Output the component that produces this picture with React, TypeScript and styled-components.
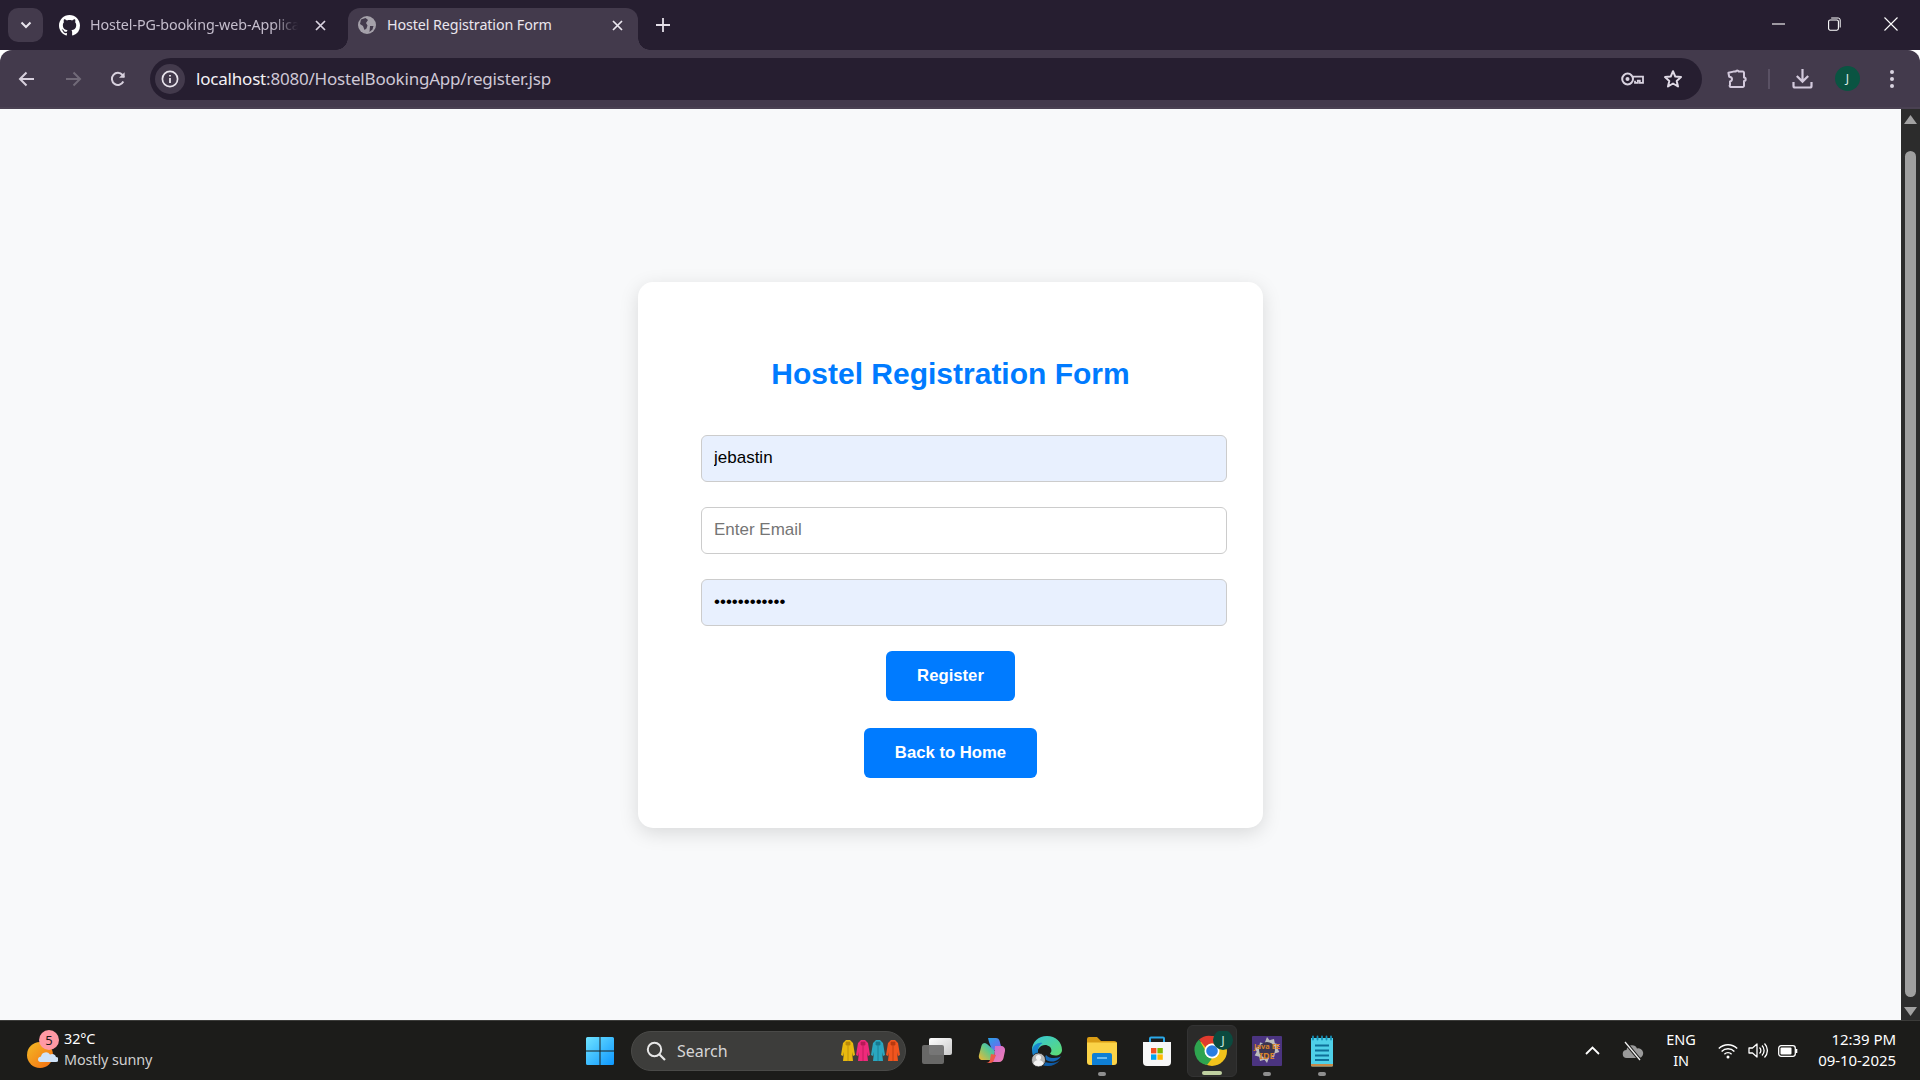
import React from "react";
import styled, { createGlobalStyle } from "styled-components";

const Global = createGlobalStyle`
  html, body { margin: 0; padding: 0; height: 100%; overflow: hidden; }
  #root { height: 1080px; }
  * { font-family: "Noto Sans", sans-serif; }
`;

const Shell = styled.div`
  width: 1920px; height: 1080px; display: flex; flex-direction: column; overflow: hidden;
`;

/* ---------- Browser chrome ---------- */
const TabStrip = styled.div`
  height: 50px; flex: none; background: #261e30; display: flex; align-items: flex-end; padding-left: 8px; box-sizing: border-box;
`;
const TabSearch = styled.div`
  width: 35px; height: 34px; margin-bottom: 8px; border-radius: 10px; background: #433a4c;
  display: flex; align-items: center; justify-content: center; flex: none;
`;
const Tab = styled.div<{ $active?: boolean }>`
  width: ${p => (p.$active ? 290 : 293)}px; height: 42px; flex: none; position: relative; box-sizing: border-box;
  display: flex; align-items: center; padding: 0 ${p => (p.$active ? 15 : 10)}px 8px ${p => (p.$active ? 10 : 16)}px;
  margin-left: ${p => (p.$active ? 12 : 0)}px;
  border-radius: 12px 12px 0 0; background: ${p => (p.$active ? "#433a4c" : "transparent")};
  color: ${p => (p.$active ? "#eae6ee" : "#c4bdcc")};
  ${p => p.$active && `
    &::before, &::after { content: ""; position: absolute; bottom: 0; width: 12px; height: 12px; }
    &::before { left: -12px; background: radial-gradient(circle at 0 0, transparent 11.5px, #433a4c 12px); }
    &::after { right: -12px; background: radial-gradient(circle at 100% 0, transparent 11.5px, #433a4c 12px); }
  `}
`;
const TabTitle = styled.span<{ $fade?: boolean }>`
  flex: 1; min-width: 0; margin-left: ${p => (p.$fade ? 10 : 11)}px; font-size: 14.3px; white-space: nowrap; overflow: hidden; position: relative; top: -1px; letter-spacing: -0.1px;
  ${p => p.$fade && "margin-right: 17px; -webkit-mask-image: linear-gradient(90deg, #000 88%, transparent 100%);"}
`;
const NewTab = styled.div`
  margin: 0 0 9px 14px; width: 22px; height: 32px; display: flex; align-items: center; justify-content: center; color: #e4dfe8;
`;
const WindowControls = styled.div`
  margin-left: auto; height: 50px; display: flex; align-items: center; padding: 0 22px 2px 0; gap: 43px; box-sizing: border-box;
`;
const Toolbar = styled.div`
  height: 59px; flex: none; background: #433a4c; border-radius: 12px 12px 0 0; display: flex; align-items: center; box-sizing: border-box;
  border-bottom: 2px solid #4a4152; padding: 0 0 0 15px;
`;
const NavButton = styled.div`
  width: 24px; height: 24px; flex: none; margin-right: 21.5px; display: flex; align-items: center; justify-content: center;
`;
const Omnibox = styled.div`
  width: 1552px; height: 42px; margin-left: -1.5px; border-radius: 21px; background: #261e30; flex: none;
  display: flex; align-items: center; padding: 0 19px 0 5px; box-sizing: border-box;
`;
const InfoBubble = styled.div`
  width: 30px; height: 30px; border-radius: 50%; background: #433a4c; display: flex; align-items: center; justify-content: center; flex: none;
`;
const Url = styled.div`
  margin-left: 11px; font-size: 17px; color: #cfc8d6; letter-spacing: -0.2px; flex: 1;
  b { font-weight: 400; color: #f4f1f6; }
`;
const OmniIcons = styled.div`
  display: flex; align-items: center; gap: 19px;
`;
const ToolIcons = styled.div`
  display: flex; align-items: center; margin-left: 24px; flex: none;
`;
const Separator = styled.div`
  width: 2px; height: 20px; background: #5a5164; margin: 0 22px 0 20px;
`;
const Avatar = styled.div`
  width: 25px; height: 25px; border-radius: 50%; background: #0a5442; color: #dfeee9; font-size: 12px; margin: 0 29px 0 22px;
  display: flex; align-items: center; justify-content: center; flex: none;
`;

/* ---------- Page ---------- */
const Viewport = styled.div`
  flex: 1; min-height: 0; display: flex; background: #f8f9fa;
`;
const Page = styled.main`
  flex: 1; display: flex; align-items: center; justify-content: center; padding-bottom: 19px;
`;
const Card = styled.div`
  width: 625px; height: 546px; box-sizing: border-box; background: #fff; border-radius: 15px; padding: 50px 63px;
  box-shadow: 0 5px 19px rgba(0, 0, 0, 0.13); display: flex; flex-direction: column; align-items: flex-start;
`;
const Title = styled.h2`
  margin: 24px 0 44px; align-self: stretch; text-align: center; color: #007bff;
  font: 700 30px/35px "Liberation Sans", Arial, sans-serif;
`;
const Field = styled.input<{ $filled?: boolean }>`
  display: block; width: 100%; height: 43px; flex: none; box-sizing: content-box; padding: 0 13px 2px 12px; margin: 0 0 25px; border: 1px solid #ccc; border-radius: 6px;
  font: 400 17px "Liberation Sans", Arial, sans-serif; color: #000; outline: none;
  background: ${p => (p.$filled ? "#e8f0fe" : "#fff")};
  &::placeholder { color: #757575; opacity: 1; }
`;
const Actions = styled.div`
  align-self: stretch; display: flex; flex-direction: column; align-items: center; gap: 27px;
`;
const Primary = styled.button`
  height: 50px; padding: 0 31px; border: 0; border-radius: 6px; background: #007bff; color: #fff;
  font: 700 16.7px "Liberation Sans", Arial, sans-serif;
`;
const Scrollbar = styled.div`
  width: 19px; flex: none; background: #2c2c2c; display: flex; flex-direction: column; align-items: center; justify-content: space-between; padding: 6px 0 4px; box-sizing: border-box;
`;
const Thumb = styled.div`
  width: 11px; flex: 1; background: #9f9f9f; border-radius: 6px; margin: 27px 0 10px;
`;

/* ---------- Taskbar ---------- */
const Taskbar = styled.footer`
  height: 60px; flex: none; background: #1c1c1a; border-top: 1px solid #3c3c3a; box-sizing: border-box; display: flex; align-items: center; color: #fff;
`;
const Weather = styled.div`
  width: 572px; flex: none; display: flex; align-items: center; padding-left: 26px; box-sizing: border-box;
`;
const WeatherIcon = styled.div`
  width: 32px; height: 40px; position: relative; flex: none; margin-right: 6px;
`;
const Badge = styled.span`
  position: absolute; left: 13px; top: -1px; width: 20px; height: 20px; border-radius: 50%; background: #ff99a4; color: #1a1a1a;
  font-size: 13px; display: flex; align-items: center; justify-content: center;
`;
const WeatherText = styled.div`
  font-size: 14.4px; line-height: 21px; letter-spacing: -0.1px; margin-top: -4px;
  small { display: block; font-size: 14.4px; color: #cfcfcf; }
`;
const Slot = styled.div`
  width: 55px; height: 52px; flex: none; position: relative; display: flex; align-items: center; justify-content: center; border-radius: 6px;
`;
const ActiveSlot = styled(Slot)`
  background: #2b2b2a; border: 1px solid #333; box-sizing: border-box; width: 50px; margin: 0 2.5px;
`;
const RunDot = styled.i<{ $active?: boolean }>`
  position: absolute; bottom: 1px; left: 50%; transform: translateX(-50%); height: 3.5px; border-radius: 2px;
  width: ${p => (p.$active ? 20 : 8)}px; background: ${p => (p.$active ? "#bfd0a0" : "#8e8e8e")};
`;
const SearchBox = styled.div`
  width: 275px; height: 40px; margin: 0 3px 0 4px; flex: none; box-sizing: border-box; border-radius: 20px; background: #3d3d3b; border: 1px solid #4a4a48; display: flex; align-items: center; padding: 0 5px 0 14px;
`;
const SearchLabel = styled.span`
  flex: 1; margin-left: 11px; font-size: 16px; color: #d6d6d6;
`;
const Tray = styled.div`
  margin-left: auto; display: flex; align-items: center; padding-right: 24px;
`;
const Lang = styled.div`
  width: 34px; font-size: 14.5px; line-height: 21px; text-align: center; margin: -1px 20px 0; letter-spacing: -0.1px;
`;
const Clock = styled.div`
  font-size: 15px; line-height: 21px; text-align: right; margin: -1px 0 0 10px; width: 88px; letter-spacing: -0.05px;
`;
const TrayIcon = styled.div<{ $gap?: number }>`
  display: flex; align-items: center; justify-content: center; flex: none; margin-left: ${p => p.$gap ?? 0}px;
`;

/* ---------- Icons ---------- */
const Chevron = () => (
  <svg width="12" height="8" viewBox="0 0 12 8"><path d="M1.500 1.500 6 6l4.500-4.500" fill="none" stroke="#e8e4ec" strokeWidth="2" /></svg>
);
const GitHub = () => (
  <svg width="21" height="21" viewBox="0 0 16 16" fill="#fff"><path d="M8 0C3.58 0 0 3.58 0 8c0 3.54 2.29 6.53 5.47 7.59.4.07.55-.17.55-.38 0-.19-.01-.82-.01-1.49-2.01.37-2.53-.49-2.69-.94-.09-.23-.48-.94-.82-1.13-.28-.15-.68-.52-.01-.53.63-.01 1.08.58 1.23.82.72 1.21 1.87.87 2.33.66.07-.52.28-.87.51-1.07-1.78-.2-3.64-.89-3.64-3.95 0-.87.31-1.59.82-2.15-.08-.2-.36-1.02.08-2.12 0 0 .67-.21 2.2.82.64-.18 1.32-.27 2-.27s1.36.09 2 .27c1.53-1.04 2.2-.82 2.2-.82.44 1.1.16 1.92.08 2.12.51.56.82 1.27.82 2.15 0 3.07-1.87 3.75-3.65 3.95.29.25.54.73.54 1.48 0 1.07-.01 1.93-.01 2.2 0 .21.15.46.55.38A8.01 8.01 0 0 0 16 8c0-4.42-3.58-8-8-8z" /></svg>
);
const Globe = () => (
  <svg width="18" height="18" viewBox="0 0 18 18"><circle cx="9" cy="9" r="9" fill="#a5a1aa" /><path d="M3 3.500 7.500 2 10 4 8 7l1.500 2.500-1 3L6.500 14 5 10 2 8zM12 10h3.500l-1 3.500-3 2.500z" fill="#433a4c" /></svg>
);
const CloseX = ({ c }: { c: string }) => (
  <svg width="11" height="11" viewBox="0 0 11 11"><path d="M1 1l9 9M10 1l-9 9" stroke={c} strokeWidth="1.700" fill="none" /></svg>
);
const Plus = () => (
  <svg width="14" height="14" viewBox="0 0 14 14"><path d="M7 0v14M0 7h14" stroke="currentColor" strokeWidth="1.800" /></svg>
);
const BackArrow = () => (
  <svg width="18" height="16" viewBox="0 0 18 16"><path d="M16 8H2M8.500 1.500 2 8l6.500 6.500" fill="none" stroke="#d7d0dd" strokeWidth="2" /></svg>
);
const ForwardArrow = () => (
  <svg width="18" height="16" viewBox="0 0 18 16"><path d="M2 8h14M9.500 1.500 16 8l-6.500 6.500" fill="none" stroke="#716a78" strokeWidth="2" /></svg>
);
const Reload = () => (
  <svg width="18" height="18" viewBox="0 0 18 18">
    <path d="M14.300 11.500A6 6 0 1 1 13.500 5L15 7" fill="none" stroke="#d7d0dd" strokeWidth="2" />
    <path d="M15.600 2.200v5.600H10z" fill="#d7d0dd" />
  </svg>
);
const Info = () => (
  <svg width="18" height="18" viewBox="0 0 18 18">
    <circle cx="9" cy="9" r="7.600" fill="none" stroke="#e8e4ec" strokeWidth="1.700" />
    <path d="M9 8v5M9 5v1.600" stroke="#e8e4ec" strokeWidth="1.800" />
  </svg>
);
const Key = () => (
  <svg width="23" height="14" viewBox="0 0 23 14">
    <circle cx="6.600" cy="7" r="5.400" fill="none" stroke="#d9d3e0" strokeWidth="2" />
    <circle cx="6.500" cy="7" r="2" fill="#d9d3e0" />
    <path d="M12 4.700h10v6.200h-3.200V8.600h-2v2.200H14V8.800" fill="none" stroke="#d9d3e0" strokeWidth="1.800" />
  </svg>
);
const Star = () => (
  <svg width="20" height="19" viewBox="0 0 20 19">
    <path d="M10 2.200 12.300 7.600l5.700.5-4.300 3.800 1.300 5.600L10 14.500l-5 3 1.300-5.600L2 8.100l5.700-.5z" fill="none" stroke="#e0dae6" strokeWidth="2" strokeLinejoin="round" />
  </svg>
);
const Puzzle = () => (
  <svg width="22" height="22" viewBox="0 0 22 22">
    <path d="M7.500 3.600h2.200a1.600 1.600 0 0 1 3 0h4.100a1.200 1.200 0 0 1 1.200 1.200v4.700a1.700 1.700 0 0 1 0 3.400v4.900a1.200 1.200 0 0 1-1.200 1.200H5.200A1.200 1.200 0 0 1 4 17v-3.600c1.500-.3 2-1.200 2-2.400S5.200 9 3.200 8.800L2.400 4.800z" fill="none" stroke="#d3c9dc" strokeWidth="2" strokeLinejoin="round" />
  </svg>
);
const Download = () => (
  <svg width="21" height="21" viewBox="0 0 21 21">
    <path d="M10.500 1v12M4.800 8 10.500 13.600 16.200 8" fill="none" stroke="#d3c9dc" strokeWidth="2.200" />
    <path d="M1.500 14v4a1.500 1.500 0 0 0 1.500 1.500h15a1.500 1.500 0 0 0 1.500-1.500v-4" fill="none" stroke="#d3c9dc" strokeWidth="2.200" />
  </svg>
);
const Dots = () => (
  <svg width="6" height="20" viewBox="0 0 6 20"><circle cx="3" cy="3" r="2" fill="#d9d3e0" /><circle cx="3" cy="10" r="2" fill="#d9d3e0" /><circle cx="3" cy="17" r="2" fill="#d9d3e0" /></svg>
);
const Minimize = () => (
  <svg width="13" height="14" viewBox="0 0 13 14"><path d="M0 7h13" stroke="#fff" strokeWidth="1.100" /></svg>
);
const Restore = () => (
  <svg width="13" height="14" viewBox="0 0 13 14"><rect x=".6" y="3" width="9.800" height="10.200" rx="1.600" fill="none" stroke="#fff" strokeWidth="1.100" /><path d="M3.200 1h7a2 2 0 0 1 2 2v7.500" fill="none" stroke="#fff" strokeWidth="1" /></svg>
);
const WinClose = () => (
  <svg width="14" height="14" viewBox="0 0 14 14"><path d="M.5.5l13 13M13.500.5l-13 13" stroke="#fff" strokeWidth="1.100" /></svg>
);
const TriangleUp = () => (
  <svg width="13" height="9" viewBox="0 0 13 9"><path d="M6.500 0 13 9H0z" fill="#a2a2a2" /></svg>
);
const TriangleDown = () => (
  <svg width="13" height="9" viewBox="0 0 13 9"><path d="M6.500 9 13 0H0z" fill="#a2a2a2" /></svg>
);
const SunCloud = () => (
  <svg width="32" height="40" viewBox="0 0 32 40">
    <defs><linearGradient id="sun" x1="0" y1="0" x2="1" y2="1"><stop offset="0" stopColor="#f2bb25" /><stop offset="1" stopColor="#f56c12" /></linearGradient></defs>
    <circle cx="14" cy="24" r="13" fill="url(#sun)" />
    <path d="M12 29a3.500 3.500 0 0 1 3-3.500 5 5 0 0 1 9-2 4 4 0 0 1 6 2.500 2 2 0 0 1 0 5H14a2.500 2.500 0 0 1-2-2z" fill="#cfe3f8" />
  </svg>
);
const WinLogo = () => (
  <svg width="30" height="30" viewBox="0 0 30 30">
    <defs><linearGradient id="w" x1="0" y1="0" x2="1" y2="1"><stop offset="0" stopColor="#6fe3ff" /><stop offset="1" stopColor="#0d97ff" /></linearGradient></defs>
    <path d="M1 2.500A1.500 1.500 0 0 1 2.500 1h12v13.500H1zM15.500 1H27.500A1.500 1.500 0 0 1 29 2.500v12H15.500zM1 15.500h13.500V29h-12A1.500 1.500 0 0 1 1 27.500zM15.500 15.500H29V27.500a1.500 1.500 0 0 1-1.500 1.500h-12z" fill="url(#w)" />
  </svg>
);
const SearchGlyph = () => (
  <svg width="20" height="20" viewBox="0 0 20 20"><circle cx="8.500" cy="8.500" r="6.700" fill="none" stroke="#e6e6e6" strokeWidth="2" /><path d="M13.500 13.500l5.500 5.500" stroke="#e6e6e6" strokeWidth="2.200" /></svg>
);
const CoatWrap = styled.span`
  display: inline-flex; margin-left: 1px;
`;
const Coat = ({ c, d }: { c: string; d: string }) => (
  <CoatWrap>
    <svg width="14" height="22" viewBox="0 0 14 22">
      <path d="M5 0h4l3 3 2 12-2 1-1-4 1 9H2l1-9-1 4-2-1L2 3z" fill={c} />
      <path d="M7 2v19M5 2h4v3H5z" fill={d} stroke={d} strokeWidth=".8" />
    </svg>
  </CoatWrap>
);
const TaskView = () => (
  <svg width="32" height="28" viewBox="0 0 32 28">
    <defs><linearGradient id="tv" x1="0" y1="0" x2="1" y2="1"><stop offset="0" stopColor="#fff" /><stop offset="1" stopColor="#c9c9c9" /></linearGradient></defs>
    <rect x="8" y="1" width="23" height="17" rx="2" fill="url(#tv)" />
    <rect x="1" y="8" width="22" height="19" rx="2" fill="#6e6e6e" fillOpacity=".93" />
  </svg>
);
const Copilot = () => (
  <svg width="30" height="30" viewBox="0 0 30 30">
    <defs>
      <linearGradient id="cp1" x1="0" y1="0" x2="1" y2="1"><stop offset="0" stopColor="#27a4e8" /><stop offset="1" stopColor="#7b5cf0" /></linearGradient>
      <linearGradient id="cp2" x1="0" y1="1" x2="1" y2="0"><stop offset="0" stopColor="#f6b62f" /><stop offset=".55" stopColor="#5fc98a" /><stop offset="1" stopColor="#2aa6e6" /></linearGradient>
      <linearGradient id="cp3" x1="0" y1="0" x2="1" y2="1"><stop offset="0" stopColor="#c76ad6" /><stop offset="1" stopColor="#f07fb0" /></linearGradient>
    </defs>
    <path d="M11 2h8c2 0 3 1 3.600 3L25 14H15L12 6z" fill="url(#cp1)" />
    <path d="M8 7c-2 0-3 1-3.600 3L2 19c-.8 3 1 5 3.500 5H13c2 0 3-1 3.600-3L18 15 10 8z" fill="url(#cp2)" />
    <path d="M18 10h6c2.500 0 4.500 2 4 5l-1.500 7c-.5 2-2 4-4.500 4h-9c2 0 3.500-1.500 4-3.500z" fill="url(#cp3)" />
    <path d="M14 18l5 1-2 5c-.6 2-2 3-4 3H9c2 0 3.500-1 4-3z" fill="#ee5a4a" />
  </svg>
);
const Edge = () => (
  <svg width="32" height="32" viewBox="0 0 32 32">
    <defs>
      <linearGradient id="e1" x1="0" y1="0" x2="1" y2="1"><stop offset="0" stopColor="#34c6dc" /><stop offset="1" stopColor="#5fdc6e" /></linearGradient>
      <linearGradient id="e2" x1="0" y1="0" x2="1" y2="1"><stop offset="0" stopColor="#1a8fd8" /><stop offset="1" stopColor="#0b4f9c" /></linearGradient>
    </defs>
    <path d="M1 15C1 7 7.500 1 16 1c8.500 0 15 6 15 14 0 3.500-3 5.500-6.500 5.500-2.500 0-5-.7-5.500-2 2-1.500 2-5-.5-7-3-2.500-8-2-10.500 1.500-1.500 2-2 3-7 1.500z" fill="url(#e1)" />
    <path d="M1 15c1-5 6-8 10.500-7-3.500 2-5 5.500-4.500 10 .5 5 5 10 13 10 4 0 7-1 9-3-3 4-7.500 6-12 6C8 31 1 24 1 15z" fill="url(#e2)" />
    <path d="M15 20c2 2.500 5 3 8 3 3 0 6-1 7-2-1.500 3-5 6-10 5.500-5-.5-7-3-5-6.500z" fill="#1669b8" />
    <circle cx="7.500" cy="25" r="7" fill="#b9b9b9" stroke="#1c1c1a" strokeWidth=".8" />
    <circle cx="7.500" cy="22.500" r="2.600" fill="#f3f3f3" />
    <path d="M2.500 29c.5-3 2.500-4 5-4s4.500 1 5 4a7 7 0 0 1-10 0z" fill="#f3f3f3" />
  </svg>
);
const Explorer = () => (
  <svg width="30" height="28" viewBox="0 0 30 28">
    <path d="M0 2a2 2 0 0 1 2-2h8l4 4h13a3 3 0 0 1 3 3v3H0z" fill="#d99c14" />
    <path d="M0 5.500h30V25a3 3 0 0 1-3 3H3a3 3 0 0 1-3-3z" fill="#fbd348" />
    <path d="M5 18a2 2 0 0 1 2-2h16a2 2 0 0 1 2 2v10H5z" fill="#0f7fd4" />
    <path d="M10 21h10" stroke="#8fd0f7" strokeWidth="1.500" />
  </svg>
);
const Store = () => (
  <svg width="30" height="30" viewBox="0 0 30 30">
    <path d="M8 7V2.500a1 1 0 0 1 1-1h12a1 1 0 0 1 1 1V7" fill="none" stroke="#2aa8e8" strokeWidth="2" />
    <path d="M1 6h28v20a4 4 0 0 1-4 4H5a4 4 0 0 1-4-4z" fill="#f7f7f7" />
    <rect x="9" y="12" width="5.400" height="5.400" fill="#f25022" />
    <rect x="15.400" y="12" width="5.400" height="5.400" fill="#7fba00" />
    <rect x="9" y="18.400" width="5.400" height="5.400" fill="#00a4ef" />
    <rect x="15.400" y="18.400" width="5.400" height="5.400" fill="#ffb900" />
  </svg>
);
const Chrome = () => (
  <svg width="42" height="40" viewBox="0 0 42 40">
    <g transform="translate(6 5)">
      <circle cx="15" cy="15" r="15" fill="#f1c21b" />
      <path d="M15 0a15 15 0 0 1 13 7.500H15a7.500 7.500 0 0 0-6.500 3.750L2 3.500A15 15 0 0 1 15 0z" fill="#e13b2e" />
      <path d="M2 3.500l6.500 11.250A7.500 7.500 0 0 0 15 22.500L10 29A15 15 0 0 1 2 3.500z" fill="#2ea44f" />
      <circle cx="15" cy="15" r="7.500" fill="#fff" />
      <circle cx="15" cy="15" r="5.800" fill="#2a7de1" />
    </g>
    <circle cx="32" cy="9" r="10" fill="#0b4a3f" />
    <text x="32" y="14" textAnchor="middle" fontSize="13" fill="#c9e5dc" fontFamily="Noto Sans">J</text>
  </svg>
);
const JavaEE = () => (
  <svg width="30" height="30" viewBox="0 0 30 30">
    <rect width="30" height="30" rx="1" fill="#4b3480" />
    <path d="M15 1l2.500 3.200 4.500-1.200.8 4.200 4.500 1.300-2 3.800 2 3.800-4.500 1.300-.8 4.200-4.500-1.200L15 27l-2.500-3.200-4.500 1.200-.8-4.200-4.500-1.300 2-3.800-2-3.800 4.500-1.300.8-4.200 4.500 1.200z" fill="#bdbdbd" />
    <circle cx="15" cy="14" r="8" fill="#3c3550" />
    <text x="15" y="13" textAnchor="middle" fontSize="7.500" fontWeight="700" fill="#d9822b" fontFamily="Liberation Sans">Java EE</text>
    <text x="15" y="23" textAnchor="middle" fontSize="9" fontWeight="700" fill="#d9822b" fontFamily="Liberation Sans">IDE</text>
  </svg>
);
const Notepad = () => (
  <svg width="24" height="32" viewBox="0 0 24 32">
    <path d="M1 3h22v27a1.500 1.500 0 0 1-1.500 1.500h-19A1.500 1.500 0 0 1 1 30z" fill="#4fd0e8" />
    <path d="M1 29h22v1.500a1 1 0 0 1-1 1H2a1 1 0 0 1-1-1z" fill="#c78a4a" />
    <path d="M3 1.500v3M7.500 1.500v3M12 1.500v3M16.500 1.500v3M21 1.500v3" stroke="#1690b8" strokeWidth="1.800" strokeLinecap="round" />
    <path d="M5 10.500h14M5 15.500h14M5 20.500h14M5 25h14" stroke="#0e6f98" strokeWidth="2" />
  </svg>
);
const Caret = () => (
  <svg width="15" height="9" viewBox="0 0 15 9"><path d="M1 8l6.500-6.500L14 8" fill="none" stroke="#fff" strokeWidth="1.800" /></svg>
);
const CloudOff = () => (
  <svg width="22" height="20" viewBox="0 0 22 20">
    <path d="M5 17a4 4 0 0 1-.5-8 5.500 5.500 0 0 1 10.500-1.500 4.800 4.800 0 0 1 2.500 9.500z" fill="#9a9a9a" />
    <path d="M3 1l15 18" stroke="#1c1c1a" strokeWidth="3.500" />
    <path d="M3 1l15 18" stroke="#f0f0f0" strokeWidth="1.300" />
  </svg>
);
const Wifi = () => (
  <svg width="20" height="16" viewBox="0 0 20 16">
    <path d="M.8 5.500a13 13 0 0 1 18.400 0M3.600 8.400a9 9 0 0 1 12.800 0M6.400 11.200a5 5 0 0 1 7.200 0" fill="none" stroke="#fff" strokeWidth="1.400" />
    <circle cx="10" cy="14" r="1.500" fill="#fff" />
  </svg>
);
const Volume = () => (
  <svg width="20" height="17" viewBox="0 0 20 17">
    <path d="M1 6h3.500L9 2v13L4.500 11H1z" fill="none" stroke="#fff" strokeWidth="1.300" strokeLinejoin="round" />
    <path d="M11.500 5.500a4 4 0 0 1 0 6M14 3.500a7 7 0 0 1 0 10M16.500 1.500a10 10 0 0 1 0 14" fill="none" stroke="#fff" strokeWidth="1.300" />
  </svg>
);
const Battery = () => (
  <svg width="20" height="12" viewBox="0 0 20 12">
    <rect x=".7" y=".7" width="16.600" height="10.600" rx="2.500" fill="none" stroke="#fff" strokeWidth="1.300" />
    <rect x="2.500" y="2.500" width="11" height="7" rx="1" fill="#fff" />
    <path d="M18.500 4v4" stroke="#fff" strokeWidth="1.600" />
  </svg>
);

export default function App() {
  return (
    <Shell>
      <Global />
      <TabStrip>
        <TabSearch><Chevron /></TabSearch>
        <Tab>
          <GitHub />
          <TabTitle $fade>Hostel-PG-booking-web-Application</TabTitle>
          <CloseX c="#d9d3e0" />
        </Tab>
        <Tab $active>
          <Globe />
          <TabTitle>Hostel Registration Form</TabTitle>
          <CloseX c="#ece8f0" />
        </Tab>
        <NewTab><Plus /></NewTab>
        <WindowControls>
          <Minimize />
          <Restore />
          <WinClose />
        </WindowControls>
      </TabStrip>
      <Toolbar>
        <NavButton><BackArrow /></NavButton>
        <NavButton><ForwardArrow /></NavButton>
        <NavButton><Reload /></NavButton>
        <Omnibox>
          <InfoBubble><Info /></InfoBubble>
          <Url><b>localhost</b>:8080/HostelBookingApp/register.jsp</Url>
          <OmniIcons><Key /><Star /></OmniIcons>
        </Omnibox>
        <ToolIcons>
          <Puzzle />
          <Separator />
          <Download />
          <Avatar>J</Avatar>
          <Dots />
        </ToolIcons>
      </Toolbar>
      <Viewport>
        <Page>
          <Card>
            <Title>Hostel Registration Form</Title>
            <Field $filled type="text" defaultValue="jebastin" />
            <Field type="email" placeholder="Enter Email" />
            <Field $filled type="password" defaultValue="jebastin1234" />
            <Actions>
              <Primary>Register</Primary>
              <Primary>Back to Home</Primary>
            </Actions>
          </Card>
        </Page>
        <Scrollbar>
          <TriangleUp />
          <Thumb />
          <TriangleDown />
        </Scrollbar>
      </Viewport>
      <Taskbar>
        <Weather>
          <WeatherIcon><SunCloud /><Badge>5</Badge></WeatherIcon>
          <WeatherText>32°C<small>Mostly sunny</small></WeatherText>
        </Weather>
        <Slot><WinLogo /></Slot>
        <SearchBox>
          <SearchGlyph />
          <SearchLabel>Search</SearchLabel>
          <Coat c="#e8b90f" d="#b98a08" />
          <Coat c="#ee2a7b" d="#b81a58" />
          <Coat c="#2aa7c0" d="#16798f" />
          <Coat c="#f0551f" d="#b83a10" />
        </SearchBox>
        <Slot><TaskView /></Slot>
        <Slot><Copilot /></Slot>
        <Slot><Edge /></Slot>
        <Slot><Explorer /><RunDot /></Slot>
        <Slot><Store /></Slot>
        <ActiveSlot><Chrome /><RunDot $active /></ActiveSlot>
        <Slot><JavaEE /><RunDot /></Slot>
        <Slot><Notepad /><RunDot /></Slot>
        <Tray>
          <TrayIcon><Caret /></TrayIcon>
          <TrayIcon $gap={22}><CloudOff /></TrayIcon>
          <Lang>ENG<br />IN</Lang>
          <TrayIcon><Wifi /></TrayIcon>
          <TrayIcon $gap={10}><Volume /></TrayIcon>
          <TrayIcon $gap={10}><Battery /></TrayIcon>
          <Clock>12:39 PM<br />09-10-2025</Clock>
        </Tray>
      </Taskbar>
    </Shell>
  );
}
